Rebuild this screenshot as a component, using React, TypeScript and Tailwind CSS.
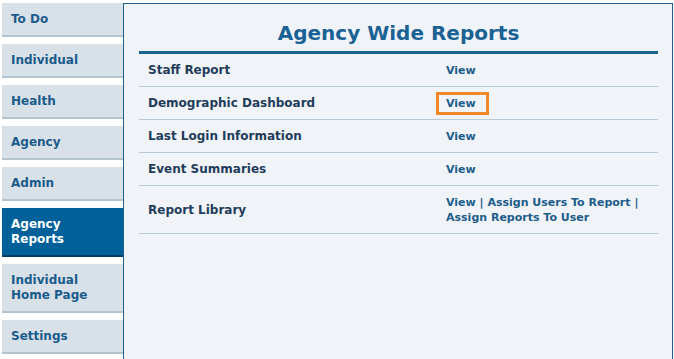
import React from 'react';

const tabs = [
    { label: 'To Do' },
    { label: 'Individual' },
    { label: 'Health' },
    { label: 'Agency' },
    { label: 'Admin' },
    { label: 'Agency Reports', lines: ['Agency', 'Reports'], active: true },
    { label: 'Individual Home Page', lines: ['Individual', 'Home Page'] },
    { label: 'Settings' },
];

const reports = [
    { name: 'Staff Report', links: ['View'] },
    { name: 'Demographic Dashboard', links: ['View'], focused: true },
    { name: 'Last Login Information', links: ['View'] },
    { name: 'Event Summaries', links: ['View'] },
    { name: 'Report Library', links: ['View', 'Assign Users To Report', 'Assign Reports To User'] },
];

const SideTab: React.FC<{ label: string; lines?: string[]; active?: boolean }> = ({ label, lines, active }) => {
    const tall = !!lines;
    return (
        <a
            href="#"
            className={
                'flex items-center pl-[9px] pt-px border-b-2 text-[12px] font-bold leading-[15px] ' +
                (tall ? 'h-[49px] ' : 'h-[34px] ') +
                (active
                    ? 'bg-[#00609a] border-[#003f63] text-white'
                    : 'bg-[#d7e1e7] border-[#b3c4ce] text-[#1b5b8c]')
            }
        >
            {lines ? (
                <span>
                    {lines.map((l) => (
                        <span key={l} className="block">{l}</span>
                    ))}
                </span>
            ) : (
                label
            )}
        </a>
    );
};

const App: React.FC = () => {
    return (
        <div
            className="flex w-[674px] h-[359px] overflow-hidden bg-white pt-[3px] pl-[2px] pr-[1px]"
            style={{ fontFamily: '"DejaVu Sans", Verdana, sans-serif' }}
        >
            <nav className="w-[121px] shrink-0 flex flex-col gap-[7px]">
                {tabs.map((t) => (
                    <SideTab key={t.label} label={t.label} lines={t.lines} active={t.active} />
                ))}
            </nav>

            <main className="flex-1 border-l border-t border-r border-[#1d5f8f] bg-[#f0f4f8] pl-[15px] pr-[14px]">
                <h1 className="pt-[17px] pb-[6px] text-center text-[20px] leading-[24px] font-bold text-[#1a6294] border-b-[3px] border-[#1a6294]">
                    Agency Wide Reports
                </h1>
                <div>
                    {reports.map((r) => (
                        <div
                            key={r.name}
                            className={
                                'flex items-center border-b border-[#b8c8d5] font-bold ' +
                                (r.links.length > 1 ? 'h-[48px]' : 'h-[33px]')
                            }
                        >
                            <div className="w-[307px] shrink-0 pl-[9px] text-[12px] text-[#1f3c5a]">{r.name}</div>
                            <div className="flex-1 text-[11px] text-[#1d5c8b] leading-[15px]">
                                {r.focused ? (
                                    <a href="#" className="inline-block -ml-[10px] w-[53px] pl-[7px] border-[3px] border-[#f0882a] leading-[17px]">
                                        View
                                    </a>
                                ) : r.links.length > 1 ? (
                                    <span>
                                        <a href="#">View</a> | <a href="#">Assign Users To Report</a> |
                                        <br />
                                        <a href="#">Assign Reports To User</a>
                                    </span>
                                ) : (
                                    <a href="#">View</a>
                                )}
                            </div>
                        </div>
                    ))}
                </div>
            </main>
        </div>
    );
};

export default App;
